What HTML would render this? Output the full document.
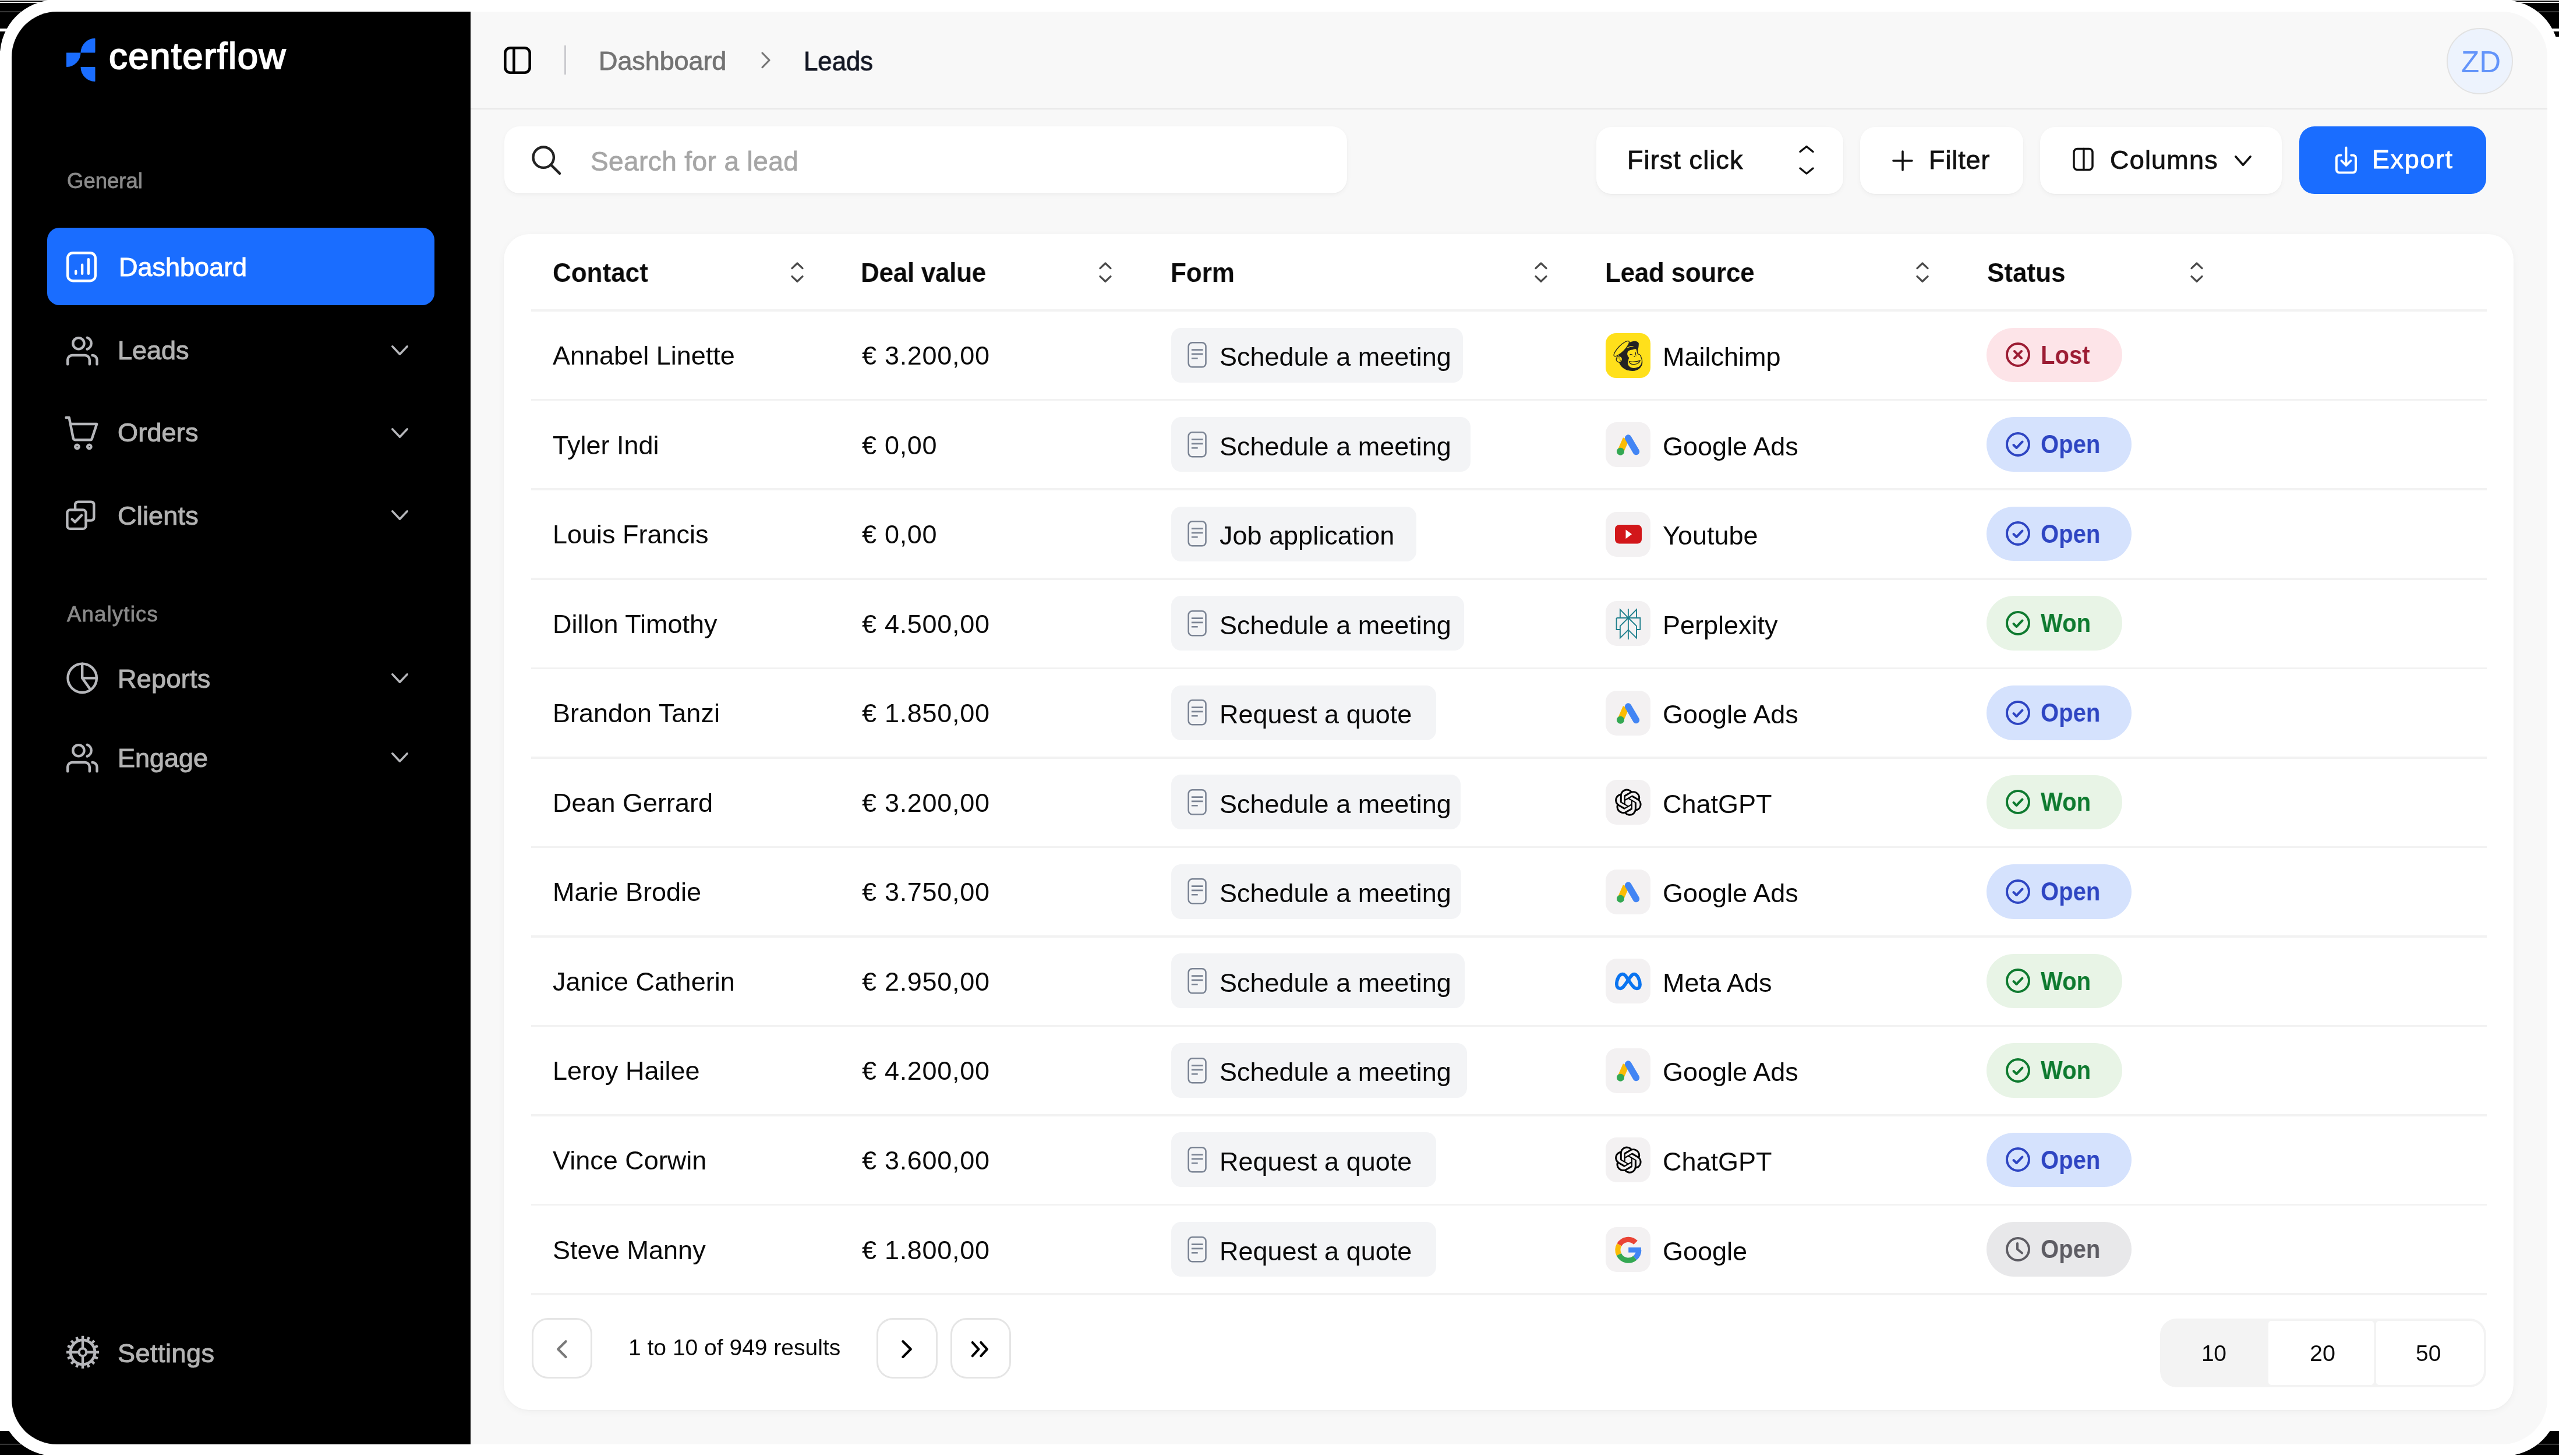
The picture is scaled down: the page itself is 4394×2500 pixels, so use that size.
<!DOCTYPE html>
<html><head><meta charset="utf-8">
<style>
*{box-sizing:border-box;margin:0;padding:0}
html,body{width:4394px;height:2500px;overflow:hidden;background:#000;font-family:"Liberation Sans",sans-serif}
.abs{position:absolute}
.t{position:absolute;white-space:nowrap;line-height:1;-webkit-font-smoothing:antialiased;will-change:transform}
</style></head><body>

<div class="abs" style="left:0;top:0;width:4394px;height:2500px;background:#fff"></div>
<div class="abs" style="left:0px;top:0.9px;width:110px;height:2.0px;background:#000"></div>
<div class="abs" style="left:0px;top:5px;width:110px;height:14.8px;background:#000"></div>
<div class="abs" style="left:0px;top:21.3px;width:110px;height:27.499999999999996px;background:#000"></div>
<div class="abs" style="left:0px;top:54px;width:110px;height:32.599999999999994px;background:#000"></div>
<div class="abs" style="left:0px;top:2457px;width:110px;height:22px;background:#000"></div>
<div class="abs" style="left:0px;top:2480.2px;width:110px;height:17.800000000000182px;background:#000"></div>
<div class="abs" style="left:4284px;top:0.9px;width:110px;height:2.0px;background:#000"></div>
<div class="abs" style="left:4284px;top:5px;width:110px;height:14.8px;background:#000"></div>
<div class="abs" style="left:4284px;top:21.3px;width:110px;height:27.499999999999996px;background:#000"></div>
<div class="abs" style="left:4284px;top:54px;width:110px;height:9px;background:#000"></div>
<div class="abs" style="left:4284px;top:2457px;width:110px;height:22px;background:#000"></div>
<div class="abs" style="left:4284px;top:2480.2px;width:110px;height:17.800000000000182px;background:#000"></div>
<div class="abs" style="left:0px;top:0px;width:4394px;height:2500px;background:#fff;border-radius:95px"></div>
<div class="abs" style="left:20px;top:20px;width:4354px;height:2460px;border-radius:78px;overflow:hidden;background:#f8f8f8">
<div class="abs" style="left:0px;top:0px;width:788px;height:2460px;background:#000"></div>
</div>
<svg class="abs" style="left:112px;top:64px;overflow:visible;" width="54" height="78" viewBox="0 0 54 78" fill="#1a6dff" stroke="none" stroke-width="4" stroke-linecap="round" stroke-linejoin="round">
<path d="M51.5 2.2 V25.8 Q51.5 26.5 50.8 26.5 H26.5 A25 25 0 0 1 50.8 1.8 Q51.5 1.8 51.5 2.2Z"/>
<path d="M2 26.5 H26.5 A24.5 24.5 0 0 1 2.7 51 Q2 51 2 50.3Z"/>
<path d="M26.5 51 H50.8 Q51.5 51 51.5 51.7 V75.3 Q51.5 76 50.8 76 A25 25 0 0 1 26.5 51Z"/>
</svg>
<div class="t" style="left:187px;top:65.2px;font-size:63.5px;color:#fff;font-weight:400;letter-spacing:1.55px;-webkit-text-stroke:2px #fff;">centerflow</div>
<div class="t" style="left:115px;top:293.1px;font-size:36.5px;color:#8a8a8a;font-weight:400;letter-spacing:0px;-webkit-text-stroke:0.8px #8a8a8a;">General</div>
<div class="abs" style="left:81px;top:391px;width:665px;height:133px;background:#1a6dff;border-radius:21px"></div>
<svg class="abs" style="left:114px;top:432px;overflow:visible;" width="52" height="52" viewBox="0 0 52 52" fill="none" stroke="#fff" stroke-width="4.4" stroke-linecap="round" stroke-linejoin="round"><rect x="2.2" y="2.2" width="47.6" height="48" rx="9"/><path d="M16.2 37.8V33.6M27.1 37.8V22.6M37.9 37.8V13.2"/></svg>
<div class="t" style="left:204px;top:435.9px;font-size:45px;color:#fff;font-weight:400;letter-spacing:0px;-webkit-text-stroke:1px #fff;">Dashboard</div>
<svg class="abs" style="left:114px;top:560px;overflow:visible;" width="56" height="68" viewBox="0 0 56 68" fill="none" stroke="#b6b7bb" stroke-width="4.4" stroke-linecap="round" stroke-linejoin="round"><circle cx="20.9" cy="29.7" r="9.6"/><path d="M35.7 19.8 A10.5 10.5 0 0 1 35.7 39.6"/><path d="M2.2 65.4 V58 A8 8 0 0 1 10.2 50 H31.8 A8 8 0 0 1 39.8 58 V65.4"/><path d="M44.5 50 A8 8 0 0 1 52.5 58 V65.4"/></svg>
<div class="t" style="left:202px;top:578.9px;font-size:45px;color:#b3b3b3;font-weight:400;letter-spacing:0px;-webkit-text-stroke:1px #b3b3b3;">Leads</div>
<svg class="abs" style="left:672px;top:593px;overflow:visible;" width="29" height="17" viewBox="0 0 29 17" fill="none" stroke="#b6b7bb" stroke-width="3.6" stroke-linecap="round" stroke-linejoin="round"><path d="M1.8 1.8 L14.5 15.2 L27.2 1.8"/></svg>
<svg class="abs" style="left:100px;top:700px;overflow:visible;" width="80" height="80" viewBox="0 0 80 80" fill="none" stroke="#b6b7bb" stroke-width="4.4" stroke-linecap="round" stroke-linejoin="round"><path d="M13.5 17 H18.7 L25.8 52.7 Q26.5 55.2 29 55.2 H55 Q57.5 55.2 58 52.7 L66.2 28 H20.9"/><circle cx="32.4" cy="67" r="3.2"/><circle cx="53.3" cy="67" r="3.2"/></svg>
<div class="t" style="left:202px;top:719.9px;font-size:45px;color:#b3b3b3;font-weight:400;letter-spacing:0.2px;-webkit-text-stroke:1px #b3b3b3;">Orders</div>
<svg class="abs" style="left:672px;top:734.5px;overflow:visible;" width="29" height="17" viewBox="0 0 29 17" fill="none" stroke="#b6b7bb" stroke-width="3.6" stroke-linecap="round" stroke-linejoin="round"><path d="M1.8 1.8 L14.5 15.2 L27.2 1.8"/></svg>
<svg class="abs" style="left:100px;top:845px;overflow:visible;" width="80" height="80" viewBox="0 0 80 80" fill="none" stroke="#b6b7bb" stroke-width="4.4" stroke-linecap="round" stroke-linejoin="round"><rect x="15.4" y="30.5" width="32.1" height="32.4" rx="5"/><path d="M29.1 30.5 V21.8 Q29.1 16.8 34.1 16.8 H56.3 Q61.3 16.8 61.3 21.8 V43.6 Q61.3 48.6 56.3 48.6 H47.5"/><path d="M23.6 46.4 L28.8 51.4 L40.1 39.8"/></svg>
<div class="t" style="left:202px;top:862.9px;font-size:45px;color:#b3b3b3;font-weight:400;letter-spacing:0.2px;-webkit-text-stroke:1px #b3b3b3;">Clients</div>
<svg class="abs" style="left:672px;top:876px;overflow:visible;" width="29" height="17" viewBox="0 0 29 17" fill="none" stroke="#b6b7bb" stroke-width="3.6" stroke-linecap="round" stroke-linejoin="round"><path d="M1.8 1.8 L14.5 15.2 L27.2 1.8"/></svg>
<div class="t" style="left:115px;top:1036.6px;font-size:36.5px;color:#8a8a8a;font-weight:400;letter-spacing:1.2px;-webkit-text-stroke:0.8px #8a8a8a;">Analytics</div>
<svg class="abs" style="left:100px;top:1125px;overflow:visible;" width="80" height="80" viewBox="0 0 80 80" fill="none" stroke="#b6b7bb" stroke-width="4.4" stroke-linecap="round" stroke-linejoin="round"><circle cx="41.2" cy="39.3" r="24.7"/><path d="M41.2 14.6 V39.3 H65.9 M41.2 39.3 L54.4 57.7"/></svg>
<div class="t" style="left:202px;top:1142.9px;font-size:45px;color:#b3b3b3;font-weight:400;letter-spacing:0.3px;-webkit-text-stroke:1px #b3b3b3;">Reports</div>
<svg class="abs" style="left:672px;top:1156px;overflow:visible;" width="29" height="17" viewBox="0 0 29 17" fill="none" stroke="#b6b7bb" stroke-width="3.6" stroke-linecap="round" stroke-linejoin="round"><path d="M1.8 1.8 L14.5 15.2 L27.2 1.8"/></svg>
<svg class="abs" style="left:114px;top:1258.5px;overflow:visible;" width="56" height="68" viewBox="0 0 56 68" fill="none" stroke="#b6b7bb" stroke-width="4.4" stroke-linecap="round" stroke-linejoin="round"><circle cx="20.9" cy="29.7" r="9.6"/><path d="M35.7 19.8 A10.5 10.5 0 0 1 35.7 39.6"/><path d="M2.2 65.4 V58 A8 8 0 0 1 10.2 50 H31.8 A8 8 0 0 1 39.8 58 V65.4"/><path d="M44.5 50 A8 8 0 0 1 52.5 58 V65.4"/></svg>
<div class="t" style="left:202px;top:1278.9px;font-size:45px;color:#b3b3b3;font-weight:400;letter-spacing:0px;-webkit-text-stroke:1px #b3b3b3;">Engage</div>
<svg class="abs" style="left:672px;top:1291.6px;overflow:visible;" width="29" height="17" viewBox="0 0 29 17" fill="none" stroke="#b6b7bb" stroke-width="3.6" stroke-linecap="round" stroke-linejoin="round"><path d="M1.8 1.8 L14.5 15.2 L27.2 1.8"/></svg>
<svg class="abs" style="left:100px;top:2280px;overflow:visible;" width="84" height="84" viewBox="0 0 84 84" fill="none" stroke="#b6b7bb" stroke-width="4.4" stroke-linecap="round" stroke-linejoin="round"><circle cx="42" cy="41.8" r="20.9" stroke-width="4.8"/><circle cx="42" cy="41.8" r="6.5" stroke-width="4"/><path d="M42 21 V35.3 M42 48.3 V62.6 M21 41.8 H35.5 M48.5 41.8 H63"/><path d="M63.00 41.80 L70.00 41.80 M61.40 49.84 L67.87 52.52 M56.85 56.65 L61.80 61.60 M50.04 61.20 L52.72 67.67 M42.00 62.80 L42.00 69.80 M33.96 61.20 L31.28 67.67 M27.15 56.65 L22.20 61.60 M22.60 49.84 L16.13 52.52 M21.00 41.80 L14.00 41.80 M22.60 33.76 L16.13 31.08 M27.15 26.95 L22.20 22.00 M33.96 22.40 L31.28 15.93 M42.00 20.80 L42.00 13.80 M50.04 22.40 L52.72 15.93 M56.85 26.95 L61.80 22.00 M61.40 33.76 L67.87 31.08 " stroke-linecap="butt"/></svg>
<div class="t" style="left:202px;top:2300.9px;font-size:45px;color:#b3b3b3;font-weight:400;letter-spacing:0.5px;-webkit-text-stroke:1px #b3b3b3;">Settings</div>
<svg class="abs" style="left:865px;top:80px;overflow:visible;" width="48" height="48" viewBox="0 0 48 48" fill="none" stroke="#000" stroke-width="4.6" stroke-linecap="round" stroke-linejoin="round"><rect x="2.3" y="2.3" width="42.4" height="42.4" rx="9"/><path d="M17.4 2.3 V44.7"/></svg>
<div class="abs" style="left:968.8px;top:77.6px;width:2.8px;height:50px;background:#cbcbcf"></div>
<div class="t" style="left:1028px;top:81.9px;font-size:45px;color:#737373;font-weight:400;letter-spacing:-0.1px;-webkit-text-stroke:0.8px #737373;">Dashboard</div>
<svg class="abs" style="left:1300px;top:86px;overflow:visible;" width="28" height="34" viewBox="0 0 28 34" fill="none" stroke="#777" stroke-width="3.2" stroke-linecap="round" stroke-linejoin="round"><path d="M9 5 L21 17.3 L9 29.6"/></svg>
<div class="t" style="left:1380px;top:82.1px;font-size:46px;color:#141824;font-weight:400;letter-spacing:0px;transform:scaleX(0.95);transform-origin:0 0;-webkit-text-stroke:0.9px #141824;">Leads</div>
<div class="abs" style="left:4201px;top:48px;width:114px;height:114px;background:#edf3fd;border:2px solid #e2e2e2;border-radius:50%"></div>
<div class="t" style="left:4226px;top:80.8px;font-size:51px;color:#6394fa;font-weight:400;letter-spacing:0px;">ZD</div>
<div class="abs" style="left:808px;top:186px;width:3566px;height:2px;background:#e8e8e8"></div>
<div class="abs" style="left:866px;top:217px;width:1447px;height:115px;background:#fff;border-radius:26px;box-shadow:0 3px 8px rgba(0,0,0,0.04),0 1px 2px rgba(0,0,0,0.03)"></div>
<svg class="abs" style="left:900px;top:235px;overflow:visible;" width="80" height="80" viewBox="0 0 80 80" fill="none" stroke="#222" stroke-width="4.4" stroke-linecap="round" stroke-linejoin="round"><circle cx="33.2" cy="35.2" r="17.7"/><path d="M46 48 L61 62.9"/></svg>
<div class="t" style="left:1013.5px;top:254.1px;font-size:46px;color:#a6a6a6;font-weight:400;letter-spacing:0.4px;-webkit-text-stroke:0.8px #a6a6a6;">Search for a lead</div>
<div class="abs" style="left:2741px;top:218px;width:424px;height:115px;background:#fff;border-radius:26px;box-shadow:0 3px 8px rgba(0,0,0,0.04),0 1px 2px rgba(0,0,0,0.03)"></div>
<div class="t" style="left:2794px;top:251.9px;font-size:45px;color:#111;font-weight:400;letter-spacing:1.1px;-webkit-text-stroke:0.8px #111;">First click</div>
<svg class="abs" style="left:3085px;top:246px;overflow:visible;" width="34" height="58" viewBox="0 0 34 58" fill="none" stroke="#111" stroke-width="3.4" stroke-linecap="round" stroke-linejoin="round"><path d="M6 14.5 L17 5.5 L28 14.5 M6 43 L17 52 L28 43"/></svg>
<div class="abs" style="left:3194px;top:218px;width:280px;height:115px;background:#fff;border-radius:26px;box-shadow:0 3px 8px rgba(0,0,0,0.04),0 1px 2px rgba(0,0,0,0.03)"></div>
<svg class="abs" style="left:3245px;top:255px;overflow:visible;" width="44" height="44" viewBox="0 0 44 44" fill="none" stroke="#111" stroke-width="3.6" stroke-linecap="round" stroke-linejoin="round"><path d="M22 5 V37 M6 21 H38"/></svg>
<div class="t" style="left:3312px;top:251.9px;font-size:45px;color:#111;font-weight:400;letter-spacing:0.9px;-webkit-text-stroke:0.8px #111;">Filter</div>
<div class="abs" style="left:3503px;top:217.5px;width:415px;height:115px;background:#fff;border-radius:26px;box-shadow:0 3px 8px rgba(0,0,0,0.04),0 1px 2px rgba(0,0,0,0.03)"></div>
<svg class="abs" style="left:3557px;top:252px;overflow:visible;" width="40" height="43" viewBox="0 0 40 43" fill="none" stroke="#111" stroke-width="3.5" stroke-linecap="round" stroke-linejoin="round"><rect x="4" y="3.5" width="32" height="36" rx="6"/><path d="M20.9 3.5 V39.5"/></svg>
<div class="t" style="left:3623px;top:251.9px;font-size:45px;color:#111;font-weight:400;letter-spacing:1.2px;-webkit-text-stroke:0.8px #111;">Columns</div>
<svg class="abs" style="left:3837px;top:266.5px;overflow:visible;" width="29" height="18" viewBox="0 0 29 18" fill="none" stroke="#111" stroke-width="3.6" stroke-linecap="round" stroke-linejoin="round"><path d="M1.8 1.8 L14.5 16.2 L27.2 1.8"/></svg>
<div class="abs" style="left:3948px;top:217px;width:321px;height:116px;background:#1a6dff;border-radius:26px"></div>
<svg class="abs" style="left:3990px;top:235px;overflow:visible;" width="80" height="80" viewBox="0 0 80 80" fill="none" stroke="#fff" stroke-width="3.85" stroke-linecap="round" stroke-linejoin="round"><path d="M29.7 31.6 H26.9 Q21.9 31.6 21.9 36.6 V56.3 Q21.9 61.3 26.9 61.3 H50 Q55 61.3 55 56.3 V36.6 Q55 31.6 50 31.6 H47.2"/><path d="M38.5 18.4 V49 M30.5 41 L38.5 49 L46.5 41"/></svg>
<div class="t" style="left:4073px;top:250.9px;font-size:45px;color:#fff;font-weight:400;letter-spacing:1.6px;-webkit-text-stroke:0.8px #fff;">Export</div>
<div class="abs" style="left:865px;top:402px;width:3451px;height:2019px;background:#fff;border-radius:44px;box-shadow:0 3px 14px rgba(0,0,0,0.04),0 1px 3px rgba(0,0,0,0.025)"></div>
<div class="t" style="left:949px;top:444.6px;font-size:46px;color:#0a0a0a;font-weight:700;letter-spacing:0px;transform:scaleX(0.957);transform-origin:0 0;">Contact</div>
<svg class="abs" style="left:1356.6px;top:448px;overflow:visible;" width="24" height="40" viewBox="0 0 24 40" fill="none" stroke="#4a4a4a" stroke-width="3.3" stroke-linecap="round" stroke-linejoin="round"><path d="M3 12.6 L12 4 L21 12.6 M3 26.6 L12 35.3 L21 26.6"/></svg>
<div class="t" style="left:1478px;top:444.6px;font-size:46px;color:#0a0a0a;font-weight:700;letter-spacing:-0.3px;transform:scaleX(0.957);transform-origin:0 0;">Deal value</div>
<svg class="abs" style="left:1885.5px;top:448px;overflow:visible;" width="24" height="40" viewBox="0 0 24 40" fill="none" stroke="#4a4a4a" stroke-width="3.3" stroke-linecap="round" stroke-linejoin="round"><path d="M3 12.6 L12 4 L21 12.6 M3 26.6 L12 35.3 L21 26.6"/></svg>
<div class="t" style="left:2009.5px;top:444.6px;font-size:46px;color:#0a0a0a;font-weight:700;letter-spacing:0px;transform:scaleX(0.957);transform-origin:0 0;">Form</div>
<svg class="abs" style="left:2634px;top:448px;overflow:visible;" width="24" height="40" viewBox="0 0 24 40" fill="none" stroke="#4a4a4a" stroke-width="3.3" stroke-linecap="round" stroke-linejoin="round"><path d="M3 12.6 L12 4 L21 12.6 M3 26.6 L12 35.3 L21 26.6"/></svg>
<div class="t" style="left:2755.5px;top:444.6px;font-size:46px;color:#0a0a0a;font-weight:700;letter-spacing:-0.3px;transform:scaleX(0.957);transform-origin:0 0;">Lead source</div>
<svg class="abs" style="left:3288.5px;top:448px;overflow:visible;" width="24" height="40" viewBox="0 0 24 40" fill="none" stroke="#4a4a4a" stroke-width="3.3" stroke-linecap="round" stroke-linejoin="round"><path d="M3 12.6 L12 4 L21 12.6 M3 26.6 L12 35.3 L21 26.6"/></svg>
<div class="t" style="left:3412px;top:444.6px;font-size:46px;color:#0a0a0a;font-weight:700;letter-spacing:0px;transform:scaleX(0.957);transform-origin:0 0;">Status</div>
<svg class="abs" style="left:3759.5px;top:448px;overflow:visible;" width="24" height="40" viewBox="0 0 24 40" fill="none" stroke="#4a4a4a" stroke-width="3.3" stroke-linecap="round" stroke-linejoin="round"><path d="M3 12.6 L12 4 L21 12.6 M3 26.6 L12 35.3 L21 26.6"/></svg>
<div class="abs" style="left:912px;top:531.35px;width:3358px;height:3.5px;background:#f2f2f2"></div>
<div class="t" style="left:949px;top:588.0px;font-size:45px;color:#0a0a0a;font-weight:400;letter-spacing:0px;">Annabel Linette</div>
<div class="t" style="left:1480px;top:588.0px;font-size:45px;color:#0a0a0a;font-weight:400;letter-spacing:0.7px;">€ 3.200,00</div>
<div class="abs" style="left:2011px;top:562.5px;width:501px;height:94px;background:#f3f4f6;border-radius:17px"></div>
<svg class="abs" style="left:2038px;top:586.1px;overflow:visible;" width="36" height="47" viewBox="0 0 36 47" fill="none" stroke="#7b8494" stroke-width="2.6" stroke-linecap="round" stroke-linejoin="round"><rect x="2.7" y="2.2" width="29.8" height="42.1" rx="6.5"/><path d="M7.9 14.6 H27.6 M7.9 21.9 H27.6 M7.9 29.2 H18.7" stroke-linecap="butt"/></svg>
<div class="t" style="left:2094px;top:590.0px;font-size:45px;color:#0a0a0a;font-weight:400;letter-spacing:0px;">Schedule a meeting</div>
<div class="abs" style="left:2757px;top:571.5px;width:77px;height:77px;background:#ffe01b;border-radius:18px"></div>
<svg class="abs" style="left:2757px;top:571.5px;overflow:visible;" width="77" height="77" viewBox="0 0 77 77" fill="none" stroke="none" stroke-width="4" stroke-linecap="round" stroke-linejoin="round">
<path d="M56.8 19.5 C57.8 15.5 53 13.2 47.5 14 C41 15 33 20 28 27 C23 34 21.5 40 22.5 47.5 C24 57.5 33.5 65 46 65 C56 65 63.5 58 63.4 49 L55 40 L55.2 30 C56.2 26 56.8 22 56.8 19.5 Z" fill="#232323"/>
<path d="M45.1 27.9 C48 27.2 50.5 26.2 52.5 26.4 C54.2 29 54.5 33 55.2 35.6 C58 36.5 60.8 38.5 60.8 41.2 C62.3 43.8 62.8 46.5 62.4 48.8 C62.3 54.8 58.8 58.4 54 59.5 C50 60.8 44.5 60.8 41.2 58.6 C38.5 56.5 37.2 53.5 37.7 51.6 C38.2 48.6 37.8 45.8 39.5 42.5 C37.6 40.2 36.2 37.6 36.5 35.3 C36.8 32 38.2 30.2 39.6 29.8 C41.3 28.6 43.2 28 45.1 27.9 Z" fill="#ffe01b" stroke="#232323" stroke-width="1.3"/>
<path d="M33.5 26.5 C38 23.5 44 21.2 48.5 22.2 C45 23.2 38 25 33.5 26.5 Z" fill="#ffe01b"/>
<ellipse cx="27.3" cy="26.6" rx="17.8" ry="5.4" transform="rotate(-45 27.3 26.6)" fill="#ffe01b" stroke="#232323" stroke-width="1.4"/>
<circle cx="23.4" cy="44.8" r="5.2" fill="#ffe01b" stroke="#232323" stroke-width="1.4"/>
<path d="M21.3 43.2 C22.5 41.5 24.8 42 24.6 44 C24.4 45.3 25 46.5 25.3 47.3" fill="none" stroke="#232323" stroke-width="1"/>
<path d="M40.6 48.6 C45 50 53 49.5 59.3 46.8 C58.5 50.5 54.5 53.5 49 53.6 C44.5 53.8 41 52 40.6 48.6 Z" fill="#ffe01b" stroke="#232323" stroke-width="1.3"/>
<path d="M41.6 37.2 C43 36 45.2 36.4 45.8 37.6" fill="none" stroke="#232323" stroke-width="1.2"/>
<circle cx="49.2" cy="39.9" r="0.9" fill="#232323"/>
<path d="M51.6 33.4 V36.5" stroke="#232323" stroke-width="1.3" fill="none"/>
<circle cx="52" cy="38.9" r="0.7" fill="#232323"/>
</svg>
<div class="t" style="left:2855px;top:590.0px;font-size:45px;color:#0a0a0a;font-weight:400;letter-spacing:0px;">Mailchimp</div>
<div class="abs" style="left:3411px;top:562.8000000000001px;width:233px;height:93.5px;background:#fde4e8;border-radius:47px"></div>
<svg class="abs" style="left:3444px;top:588.3000000000001px;overflow:visible;" width="42" height="42" viewBox="0 0 42 42" fill="none" stroke="#9c1c33" stroke-width="4" stroke-linecap="round" stroke-linejoin="round"><circle cx="21" cy="21" r="19"/><path d="M15 15 L27 27 M27 15 L15 27"/></svg>
<div class="t" style="left:3504px;top:586.7px;font-size:45px;color:#9c1c33;font-weight:700;letter-spacing:0px;transform:scaleX(0.89);transform-origin:0 0;">Lost</div>
<div class="abs" style="left:912px;top:684.9000000000001px;width:3358px;height:3.5px;background:#f2f2f2"></div>
<div class="t" style="left:949px;top:741.5px;font-size:45px;color:#0a0a0a;font-weight:400;letter-spacing:0px;">Tyler Indi</div>
<div class="t" style="left:1480px;top:741.5px;font-size:45px;color:#0a0a0a;font-weight:400;letter-spacing:0.7px;">€ 0,00</div>
<div class="abs" style="left:2011px;top:716.0500000000001px;width:514px;height:94px;background:#f3f4f6;border-radius:17px"></div>
<svg class="abs" style="left:2038px;top:739.6500000000001px;overflow:visible;" width="36" height="47" viewBox="0 0 36 47" fill="none" stroke="#7b8494" stroke-width="2.6" stroke-linecap="round" stroke-linejoin="round"><rect x="2.7" y="2.2" width="29.8" height="42.1" rx="6.5"/><path d="M7.9 14.6 H27.6 M7.9 21.9 H27.6 M7.9 29.2 H18.7" stroke-linecap="butt"/></svg>
<div class="t" style="left:2094px;top:743.5px;font-size:45px;color:#0a0a0a;font-weight:400;letter-spacing:0px;">Schedule a meeting</div>
<div class="abs" style="left:2757px;top:725.0500000000001px;width:77px;height:77px;background:#f3f1f2;border-radius:19px"></div>
<svg class="abs" style="left:2757px;top:725.0500000000001px;overflow:visible;" width="77" height="77" viewBox="0 0 77 77" fill="none" stroke="none" stroke-width="4" stroke-linecap="round" stroke-linejoin="round">
<path d="M35 28.5 L25.5 50.2" stroke="#fbbc04" stroke-width="11" stroke-linecap="butt"/>
<path d="M38.7 27.1 L52.4 50.5" stroke="#4285f4" stroke-width="11.5" stroke-linecap="round"/>
<circle cx="25.5" cy="50.2" r="6.5" fill="#34a853" stroke="none"/>
</svg>
<div class="t" style="left:2855px;top:743.5px;font-size:45px;color:#0a0a0a;font-weight:400;letter-spacing:0px;">Google Ads</div>
<div class="abs" style="left:3411px;top:716.3500000000001px;width:249px;height:93.5px;background:#d5e2fd;border-radius:47px"></div>
<svg class="abs" style="left:3444px;top:741.8500000000001px;overflow:visible;" width="42" height="42" viewBox="0 0 42 42" fill="none" stroke="#2e45c2" stroke-width="4" stroke-linecap="round" stroke-linejoin="round"><circle cx="21" cy="21" r="19"/><path d="M13.5 22 L18.5 27 L28.5 16.5"/></svg>
<div class="t" style="left:3504px;top:740.2px;font-size:45px;color:#2e45c2;font-weight:700;letter-spacing:0px;transform:scaleX(0.89);transform-origin:0 0;">Open</div>
<div class="abs" style="left:912px;top:838.45px;width:3358px;height:3.5px;background:#f2f2f2"></div>
<div class="t" style="left:949px;top:895.1px;font-size:45px;color:#0a0a0a;font-weight:400;letter-spacing:0px;">Louis Francis</div>
<div class="t" style="left:1480px;top:895.1px;font-size:45px;color:#0a0a0a;font-weight:400;letter-spacing:0.7px;">€ 0,00</div>
<div class="abs" style="left:2011px;top:869.6px;width:421px;height:94px;background:#f3f4f6;border-radius:17px"></div>
<svg class="abs" style="left:2038px;top:893.2px;overflow:visible;" width="36" height="47" viewBox="0 0 36 47" fill="none" stroke="#7b8494" stroke-width="2.6" stroke-linecap="round" stroke-linejoin="round"><rect x="2.7" y="2.2" width="29.8" height="42.1" rx="6.5"/><path d="M7.9 14.6 H27.6 M7.9 21.9 H27.6 M7.9 29.2 H18.7" stroke-linecap="butt"/></svg>
<div class="t" style="left:2094px;top:897.1px;font-size:45px;color:#0a0a0a;font-weight:400;letter-spacing:0px;">Job application</div>
<div class="abs" style="left:2757px;top:878.6px;width:77px;height:77px;background:#f3f1f2;border-radius:19px"></div>
<svg class="abs" style="left:2757px;top:878.6px;overflow:visible;" width="77" height="77" viewBox="0 0 77 77" fill="none" stroke="none" stroke-width="4" stroke-linecap="round" stroke-linejoin="round">
<rect x="16" y="22" width="46" height="32.5" rx="7.5" fill="#d2171a" stroke="none"/>
<path d="M34.5 30.5 L45 38.2 L34.5 46Z" fill="#fff" stroke="none"/>
</svg>
<div class="t" style="left:2855px;top:897.1px;font-size:45px;color:#0a0a0a;font-weight:400;letter-spacing:0px;">Youtube</div>
<div class="abs" style="left:3411px;top:869.9000000000001px;width:249px;height:93.5px;background:#d5e2fd;border-radius:47px"></div>
<svg class="abs" style="left:3444px;top:895.4000000000001px;overflow:visible;" width="42" height="42" viewBox="0 0 42 42" fill="none" stroke="#2e45c2" stroke-width="4" stroke-linecap="round" stroke-linejoin="round"><circle cx="21" cy="21" r="19"/><path d="M13.5 22 L18.5 27 L28.5 16.5"/></svg>
<div class="t" style="left:3504px;top:893.8px;font-size:45px;color:#2e45c2;font-weight:700;letter-spacing:0px;transform:scaleX(0.89);transform-origin:0 0;">Open</div>
<div class="abs" style="left:912px;top:992.0px;width:3358px;height:3.5px;background:#f2f2f2"></div>
<div class="t" style="left:949px;top:1048.6px;font-size:45px;color:#0a0a0a;font-weight:400;letter-spacing:0px;">Dillon Timothy</div>
<div class="t" style="left:1480px;top:1048.6px;font-size:45px;color:#0a0a0a;font-weight:400;letter-spacing:0.7px;">€ 4.500,00</div>
<div class="abs" style="left:2011px;top:1023.15px;width:503px;height:94px;background:#f3f4f6;border-radius:17px"></div>
<svg class="abs" style="left:2038px;top:1046.75px;overflow:visible;" width="36" height="47" viewBox="0 0 36 47" fill="none" stroke="#7b8494" stroke-width="2.6" stroke-linecap="round" stroke-linejoin="round"><rect x="2.7" y="2.2" width="29.8" height="42.1" rx="6.5"/><path d="M7.9 14.6 H27.6 M7.9 21.9 H27.6 M7.9 29.2 H18.7" stroke-linecap="butt"/></svg>
<div class="t" style="left:2094px;top:1050.6px;font-size:45px;color:#0a0a0a;font-weight:400;letter-spacing:0px;">Schedule a meeting</div>
<div class="abs" style="left:2757px;top:1032.15px;width:77px;height:77px;background:#f3f1f2;border-radius:19px"></div>
<svg class="abs" style="left:2757px;top:1032.15px;overflow:visible;" width="77" height="77" viewBox="0 0 77 77" fill="none" stroke="none" stroke-width="4" stroke-linecap="round" stroke-linejoin="round">
<g stroke="#20808d" stroke-width="1.9" fill="none" stroke-linejoin="miter" stroke-linecap="butt">
<path d="M38.9 13.4 V65.9"/>
<path d="M24.9 29 V14.5 L38.9 29 L53 14.5 V29"/>
<path d="M18.6 29 H59.3 V49 H53 M24.9 49 H18.6 V29"/>
<path d="M38.9 29 L24.9 42.8 V63.4 L38.9 49.6 L53 63.4 V42.8 L38.9 29"/>
</g>
<circle cx="38.9" cy="29.2" r="2.4" fill="#20808d" stroke="none"/>
</svg>
<div class="t" style="left:2855px;top:1050.6px;font-size:45px;color:#0a0a0a;font-weight:400;letter-spacing:0px;">Perplexity</div>
<div class="abs" style="left:3411px;top:1023.45px;width:233px;height:93.5px;background:#e8f4e6;border-radius:47px"></div>
<svg class="abs" style="left:3444px;top:1048.95px;overflow:visible;" width="42" height="42" viewBox="0 0 42 42" fill="none" stroke="#0e7a2f" stroke-width="4" stroke-linecap="round" stroke-linejoin="round"><circle cx="21" cy="21" r="19"/><path d="M13.5 22 L18.5 27 L28.5 16.5"/></svg>
<div class="t" style="left:3504px;top:1047.3px;font-size:45px;color:#0e7a2f;font-weight:700;letter-spacing:0px;transform:scaleX(0.89);transform-origin:0 0;">Won</div>
<div class="abs" style="left:912px;top:1145.55px;width:3358px;height:3.5px;background:#f2f2f2"></div>
<div class="t" style="left:949px;top:1202.2px;font-size:45px;color:#0a0a0a;font-weight:400;letter-spacing:0px;">Brandon Tanzi</div>
<div class="t" style="left:1480px;top:1202.2px;font-size:45px;color:#0a0a0a;font-weight:400;letter-spacing:0.7px;">€ 1.850,00</div>
<div class="abs" style="left:2011px;top:1176.7000000000003px;width:455px;height:94px;background:#f3f4f6;border-radius:17px"></div>
<svg class="abs" style="left:2038px;top:1200.3000000000002px;overflow:visible;" width="36" height="47" viewBox="0 0 36 47" fill="none" stroke="#7b8494" stroke-width="2.6" stroke-linecap="round" stroke-linejoin="round"><rect x="2.7" y="2.2" width="29.8" height="42.1" rx="6.5"/><path d="M7.9 14.6 H27.6 M7.9 21.9 H27.6 M7.9 29.2 H18.7" stroke-linecap="butt"/></svg>
<div class="t" style="left:2094px;top:1204.2px;font-size:45px;color:#0a0a0a;font-weight:400;letter-spacing:0px;">Request a quote</div>
<div class="abs" style="left:2757px;top:1185.7000000000003px;width:77px;height:77px;background:#f3f1f2;border-radius:19px"></div>
<svg class="abs" style="left:2757px;top:1185.7000000000003px;overflow:visible;" width="77" height="77" viewBox="0 0 77 77" fill="none" stroke="none" stroke-width="4" stroke-linecap="round" stroke-linejoin="round">
<path d="M35 28.5 L25.5 50.2" stroke="#fbbc04" stroke-width="11" stroke-linecap="butt"/>
<path d="M38.7 27.1 L52.4 50.5" stroke="#4285f4" stroke-width="11.5" stroke-linecap="round"/>
<circle cx="25.5" cy="50.2" r="6.5" fill="#34a853" stroke="none"/>
</svg>
<div class="t" style="left:2855px;top:1204.2px;font-size:45px;color:#0a0a0a;font-weight:400;letter-spacing:0px;">Google Ads</div>
<div class="abs" style="left:3411px;top:1177.0000000000002px;width:249px;height:93.5px;background:#d5e2fd;border-radius:47px"></div>
<svg class="abs" style="left:3444px;top:1202.5000000000002px;overflow:visible;" width="42" height="42" viewBox="0 0 42 42" fill="none" stroke="#2e45c2" stroke-width="4" stroke-linecap="round" stroke-linejoin="round"><circle cx="21" cy="21" r="19"/><path d="M13.5 22 L18.5 27 L28.5 16.5"/></svg>
<div class="t" style="left:3504px;top:1200.9px;font-size:45px;color:#2e45c2;font-weight:700;letter-spacing:0px;transform:scaleX(0.89);transform-origin:0 0;">Open</div>
<div class="abs" style="left:912px;top:1299.1000000000001px;width:3358px;height:3.5px;background:#f2f2f2"></div>
<div class="t" style="left:949px;top:1355.7px;font-size:45px;color:#0a0a0a;font-weight:400;letter-spacing:0px;">Dean Gerrard</div>
<div class="t" style="left:1480px;top:1355.7px;font-size:45px;color:#0a0a0a;font-weight:400;letter-spacing:0.7px;">€ 3.200,00</div>
<div class="abs" style="left:2011px;top:1330.25px;width:497px;height:94px;background:#f3f4f6;border-radius:17px"></div>
<svg class="abs" style="left:2038px;top:1353.85px;overflow:visible;" width="36" height="47" viewBox="0 0 36 47" fill="none" stroke="#7b8494" stroke-width="2.6" stroke-linecap="round" stroke-linejoin="round"><rect x="2.7" y="2.2" width="29.8" height="42.1" rx="6.5"/><path d="M7.9 14.6 H27.6 M7.9 21.9 H27.6 M7.9 29.2 H18.7" stroke-linecap="butt"/></svg>
<div class="t" style="left:2094px;top:1357.7px;font-size:45px;color:#0a0a0a;font-weight:400;letter-spacing:0px;">Schedule a meeting</div>
<div class="abs" style="left:2757px;top:1339.25px;width:77px;height:77px;background:#f3f1f2;border-radius:19px"></div>
<svg class="abs" style="left:2757px;top:1339.25px;overflow:visible;" width="77" height="77" viewBox="0 0 77 77" fill="none" stroke="none" stroke-width="4" stroke-linecap="round" stroke-linejoin="round"><g transform="translate(15.8 15.6) scale(1.92)"><path fill="#000" d="M22.2819 9.8211a5.9847 5.9847 0 0 0-.5157-4.9108 6.0462 6.0462 0 0 0-6.5098-2.9A6.0651 6.0651 0 0 0 4.9807 4.1818a5.9847 5.9847 0 0 0-3.9977 2.9 6.0462 6.0462 0 0 0 .7427 7.0966 5.98 5.98 0 0 0 .511 4.9107 6.051 6.051 0 0 0 6.5146 2.9001A5.9847 5.9847 0 0 0 13.2599 24a6.0557 6.0557 0 0 0 5.7718-4.2058 5.9894 5.9894 0 0 0 3.9977-2.9001 6.0557 6.0557 0 0 0-.7475-7.0729zm-9.022 12.6081a4.4755 4.4755 0 0 1-2.8764-1.0408l.1419-.0804 4.7783-2.7582a.7948.7948 0 0 0 .3927-.6813v-6.7369l2.02 1.1686a.071.071 0 0 1 .038.052v5.5826a4.504 4.504 0 0 1-4.4945 4.4944zm-9.6607-4.1254a4.4708 4.4708 0 0 1-.5346-3.0137l.142.0852 4.783 2.7582a.7712.7712 0 0 0 .7806 0l5.8428-3.3685v2.3324a.0804.0804 0 0 1-.0332.0615L9.74 19.9502a4.4992 4.4992 0 0 1-6.1408-1.6464zM2.3408 7.8956a4.485 4.485 0 0 1 2.3655-1.9728V11.6a.7664.7664 0 0 0 .3879.6765l5.8144 3.3543-2.0201 1.1685a.0757.0757 0 0 1-.071 0l-4.8303-2.7865A4.504 4.504 0 0 1 2.3408 7.872zm16.5963 3.8558L13.1038 8.364 15.1192 7.2a.0757.0757 0 0 1 .071 0l4.8303 2.7913a4.4944 4.4944 0 0 1-.6765 8.1042v-5.6772a.79.79 0 0 0-.407-.667zm2.0107-3.0231l-.142-.0852-4.7735-2.7818a.7759.7759 0 0 0-.7854 0L9.409 9.2297V6.8974a.0662.0662 0 0 1 .0284-.0615l4.8303-2.7866a4.4992 4.4992 0 0 1 6.6802 4.66zM8.3065 12.863l-2.02-1.1638a.0804.0804 0 0 1-.038-.0567V6.0742a4.4992 4.4992 0 0 1 7.3757-3.4537l-.142.0805L8.704 5.459a.7948.7948 0 0 0-.3927.6813zm1.0976-2.3654l2.602-1.4998 2.6069 1.4998v2.9994l-2.5974 1.4997-2.6067-1.4997Z"/></g></svg>
<div class="t" style="left:2855px;top:1357.7px;font-size:45px;color:#0a0a0a;font-weight:400;letter-spacing:0px;">ChatGPT</div>
<div class="abs" style="left:3411px;top:1330.55px;width:233px;height:93.5px;background:#e8f4e6;border-radius:47px"></div>
<svg class="abs" style="left:3444px;top:1356.05px;overflow:visible;" width="42" height="42" viewBox="0 0 42 42" fill="none" stroke="#0e7a2f" stroke-width="4" stroke-linecap="round" stroke-linejoin="round"><circle cx="21" cy="21" r="19"/><path d="M13.5 22 L18.5 27 L28.5 16.5"/></svg>
<div class="t" style="left:3504px;top:1354.4px;font-size:45px;color:#0e7a2f;font-weight:700;letter-spacing:0px;transform:scaleX(0.89);transform-origin:0 0;">Won</div>
<div class="abs" style="left:912px;top:1452.6499999999999px;width:3358px;height:3.5px;background:#f2f2f2"></div>
<div class="t" style="left:949px;top:1509.3px;font-size:45px;color:#0a0a0a;font-weight:400;letter-spacing:0px;">Marie Brodie</div>
<div class="t" style="left:1480px;top:1509.3px;font-size:45px;color:#0a0a0a;font-weight:400;letter-spacing:0.7px;">€ 3.750,00</div>
<div class="abs" style="left:2011px;top:1483.8000000000002px;width:498px;height:94px;background:#f3f4f6;border-radius:17px"></div>
<svg class="abs" style="left:2038px;top:1507.4px;overflow:visible;" width="36" height="47" viewBox="0 0 36 47" fill="none" stroke="#7b8494" stroke-width="2.6" stroke-linecap="round" stroke-linejoin="round"><rect x="2.7" y="2.2" width="29.8" height="42.1" rx="6.5"/><path d="M7.9 14.6 H27.6 M7.9 21.9 H27.6 M7.9 29.2 H18.7" stroke-linecap="butt"/></svg>
<div class="t" style="left:2094px;top:1511.3px;font-size:45px;color:#0a0a0a;font-weight:400;letter-spacing:0px;">Schedule a meeting</div>
<div class="abs" style="left:2757px;top:1492.8000000000002px;width:77px;height:77px;background:#f3f1f2;border-radius:19px"></div>
<svg class="abs" style="left:2757px;top:1492.8000000000002px;overflow:visible;" width="77" height="77" viewBox="0 0 77 77" fill="none" stroke="none" stroke-width="4" stroke-linecap="round" stroke-linejoin="round">
<path d="M35 28.5 L25.5 50.2" stroke="#fbbc04" stroke-width="11" stroke-linecap="butt"/>
<path d="M38.7 27.1 L52.4 50.5" stroke="#4285f4" stroke-width="11.5" stroke-linecap="round"/>
<circle cx="25.5" cy="50.2" r="6.5" fill="#34a853" stroke="none"/>
</svg>
<div class="t" style="left:2855px;top:1511.3px;font-size:45px;color:#0a0a0a;font-weight:400;letter-spacing:0px;">Google Ads</div>
<div class="abs" style="left:3411px;top:1484.1000000000001px;width:249px;height:93.5px;background:#d5e2fd;border-radius:47px"></div>
<svg class="abs" style="left:3444px;top:1509.6000000000001px;overflow:visible;" width="42" height="42" viewBox="0 0 42 42" fill="none" stroke="#2e45c2" stroke-width="4" stroke-linecap="round" stroke-linejoin="round"><circle cx="21" cy="21" r="19"/><path d="M13.5 22 L18.5 27 L28.5 16.5"/></svg>
<div class="t" style="left:3504px;top:1508.0px;font-size:45px;color:#2e45c2;font-weight:700;letter-spacing:0px;transform:scaleX(0.89);transform-origin:0 0;">Open</div>
<div class="abs" style="left:912px;top:1606.2px;width:3358px;height:3.5px;background:#f2f2f2"></div>
<div class="t" style="left:949px;top:1662.8px;font-size:45px;color:#0a0a0a;font-weight:400;letter-spacing:0px;">Janice Catherin</div>
<div class="t" style="left:1480px;top:1662.8px;font-size:45px;color:#0a0a0a;font-weight:400;letter-spacing:0.7px;">€ 2.950,00</div>
<div class="abs" style="left:2011px;top:1637.3500000000004px;width:504px;height:94px;background:#f3f4f6;border-radius:17px"></div>
<svg class="abs" style="left:2038px;top:1660.9500000000003px;overflow:visible;" width="36" height="47" viewBox="0 0 36 47" fill="none" stroke="#7b8494" stroke-width="2.6" stroke-linecap="round" stroke-linejoin="round"><rect x="2.7" y="2.2" width="29.8" height="42.1" rx="6.5"/><path d="M7.9 14.6 H27.6 M7.9 21.9 H27.6 M7.9 29.2 H18.7" stroke-linecap="butt"/></svg>
<div class="t" style="left:2094px;top:1664.8px;font-size:45px;color:#0a0a0a;font-weight:400;letter-spacing:0px;">Schedule a meeting</div>
<div class="abs" style="left:2757px;top:1646.3500000000004px;width:77px;height:77px;background:#f3f1f2;border-radius:19px"></div>
<svg class="abs" style="left:2757px;top:1646.3500000000004px;overflow:visible;" width="77" height="77" viewBox="0 0 77 77" fill="none" stroke="none" stroke-width="4" stroke-linecap="round" stroke-linejoin="round">
<path d="M38.9 36.5 C35 30 32.5 26.6 29.3 26.6 C23 26.6 18.9 36 18.9 44 C18.9 48.5 21.5 51.3 24.9 51.3 C29 51.3 32 47 38.9 36.5 C44 29 46 26.6 48.8 26.6 C54.5 26.6 59 37 59 44.5 C59 48.5 57 51.3 53.5 51.3 C49 51.3 46 47 38.9 36.5 Z" fill="none" stroke="#0a74f0" stroke-width="5.8"/>
</svg>
<div class="t" style="left:2855px;top:1664.8px;font-size:45px;color:#0a0a0a;font-weight:400;letter-spacing:0px;">Meta Ads</div>
<div class="abs" style="left:3411px;top:1637.6500000000003px;width:233px;height:93.5px;background:#e8f4e6;border-radius:47px"></div>
<svg class="abs" style="left:3444px;top:1663.1500000000003px;overflow:visible;" width="42" height="42" viewBox="0 0 42 42" fill="none" stroke="#0e7a2f" stroke-width="4" stroke-linecap="round" stroke-linejoin="round"><circle cx="21" cy="21" r="19"/><path d="M13.5 22 L18.5 27 L28.5 16.5"/></svg>
<div class="t" style="left:3504px;top:1661.5px;font-size:45px;color:#0e7a2f;font-weight:700;letter-spacing:0px;transform:scaleX(0.89);transform-origin:0 0;">Won</div>
<div class="abs" style="left:912px;top:1759.7500000000002px;width:3358px;height:3.5px;background:#f2f2f2"></div>
<div class="t" style="left:949px;top:1816.4px;font-size:45px;color:#0a0a0a;font-weight:400;letter-spacing:0px;">Leroy Hailee</div>
<div class="t" style="left:1480px;top:1816.4px;font-size:45px;color:#0a0a0a;font-weight:400;letter-spacing:0.7px;">€ 4.200,00</div>
<div class="abs" style="left:2011px;top:1790.9px;width:508px;height:94px;background:#f3f4f6;border-radius:17px"></div>
<svg class="abs" style="left:2038px;top:1814.5px;overflow:visible;" width="36" height="47" viewBox="0 0 36 47" fill="none" stroke="#7b8494" stroke-width="2.6" stroke-linecap="round" stroke-linejoin="round"><rect x="2.7" y="2.2" width="29.8" height="42.1" rx="6.5"/><path d="M7.9 14.6 H27.6 M7.9 21.9 H27.6 M7.9 29.2 H18.7" stroke-linecap="butt"/></svg>
<div class="t" style="left:2094px;top:1818.4px;font-size:45px;color:#0a0a0a;font-weight:400;letter-spacing:0px;">Schedule a meeting</div>
<div class="abs" style="left:2757px;top:1799.9px;width:77px;height:77px;background:#f3f1f2;border-radius:19px"></div>
<svg class="abs" style="left:2757px;top:1799.9px;overflow:visible;" width="77" height="77" viewBox="0 0 77 77" fill="none" stroke="none" stroke-width="4" stroke-linecap="round" stroke-linejoin="round">
<path d="M35 28.5 L25.5 50.2" stroke="#fbbc04" stroke-width="11" stroke-linecap="butt"/>
<path d="M38.7 27.1 L52.4 50.5" stroke="#4285f4" stroke-width="11.5" stroke-linecap="round"/>
<circle cx="25.5" cy="50.2" r="6.5" fill="#34a853" stroke="none"/>
</svg>
<div class="t" style="left:2855px;top:1818.4px;font-size:45px;color:#0a0a0a;font-weight:400;letter-spacing:0px;">Google Ads</div>
<div class="abs" style="left:3411px;top:1791.2px;width:233px;height:93.5px;background:#e8f4e6;border-radius:47px"></div>
<svg class="abs" style="left:3444px;top:1816.7px;overflow:visible;" width="42" height="42" viewBox="0 0 42 42" fill="none" stroke="#0e7a2f" stroke-width="4" stroke-linecap="round" stroke-linejoin="round"><circle cx="21" cy="21" r="19"/><path d="M13.5 22 L18.5 27 L28.5 16.5"/></svg>
<div class="t" style="left:3504px;top:1815.1px;font-size:45px;color:#0e7a2f;font-weight:700;letter-spacing:0px;transform:scaleX(0.89);transform-origin:0 0;">Won</div>
<div class="abs" style="left:912px;top:1913.3px;width:3358px;height:3.5px;background:#f2f2f2"></div>
<div class="t" style="left:949px;top:1969.9px;font-size:45px;color:#0a0a0a;font-weight:400;letter-spacing:0px;">Vince Corwin</div>
<div class="t" style="left:1480px;top:1969.9px;font-size:45px;color:#0a0a0a;font-weight:400;letter-spacing:0.7px;">€ 3.600,00</div>
<div class="abs" style="left:2011px;top:1944.4500000000003px;width:455px;height:94px;background:#f3f4f6;border-radius:17px"></div>
<svg class="abs" style="left:2038px;top:1968.0500000000002px;overflow:visible;" width="36" height="47" viewBox="0 0 36 47" fill="none" stroke="#7b8494" stroke-width="2.6" stroke-linecap="round" stroke-linejoin="round"><rect x="2.7" y="2.2" width="29.8" height="42.1" rx="6.5"/><path d="M7.9 14.6 H27.6 M7.9 21.9 H27.6 M7.9 29.2 H18.7" stroke-linecap="butt"/></svg>
<div class="t" style="left:2094px;top:1971.9px;font-size:45px;color:#0a0a0a;font-weight:400;letter-spacing:0px;">Request a quote</div>
<div class="abs" style="left:2757px;top:1953.4500000000003px;width:77px;height:77px;background:#f3f1f2;border-radius:19px"></div>
<svg class="abs" style="left:2757px;top:1953.4500000000003px;overflow:visible;" width="77" height="77" viewBox="0 0 77 77" fill="none" stroke="none" stroke-width="4" stroke-linecap="round" stroke-linejoin="round"><g transform="translate(15.8 15.6) scale(1.92)"><path fill="#000" d="M22.2819 9.8211a5.9847 5.9847 0 0 0-.5157-4.9108 6.0462 6.0462 0 0 0-6.5098-2.9A6.0651 6.0651 0 0 0 4.9807 4.1818a5.9847 5.9847 0 0 0-3.9977 2.9 6.0462 6.0462 0 0 0 .7427 7.0966 5.98 5.98 0 0 0 .511 4.9107 6.051 6.051 0 0 0 6.5146 2.9001A5.9847 5.9847 0 0 0 13.2599 24a6.0557 6.0557 0 0 0 5.7718-4.2058 5.9894 5.9894 0 0 0 3.9977-2.9001 6.0557 6.0557 0 0 0-.7475-7.0729zm-9.022 12.6081a4.4755 4.4755 0 0 1-2.8764-1.0408l.1419-.0804 4.7783-2.7582a.7948.7948 0 0 0 .3927-.6813v-6.7369l2.02 1.1686a.071.071 0 0 1 .038.052v5.5826a4.504 4.504 0 0 1-4.4945 4.4944zm-9.6607-4.1254a4.4708 4.4708 0 0 1-.5346-3.0137l.142.0852 4.783 2.7582a.7712.7712 0 0 0 .7806 0l5.8428-3.3685v2.3324a.0804.0804 0 0 1-.0332.0615L9.74 19.9502a4.4992 4.4992 0 0 1-6.1408-1.6464zM2.3408 7.8956a4.485 4.485 0 0 1 2.3655-1.9728V11.6a.7664.7664 0 0 0 .3879.6765l5.8144 3.3543-2.0201 1.1685a.0757.0757 0 0 1-.071 0l-4.8303-2.7865A4.504 4.504 0 0 1 2.3408 7.872zm16.5963 3.8558L13.1038 8.364 15.1192 7.2a.0757.0757 0 0 1 .071 0l4.8303 2.7913a4.4944 4.4944 0 0 1-.6765 8.1042v-5.6772a.79.79 0 0 0-.407-.667zm2.0107-3.0231l-.142-.0852-4.7735-2.7818a.7759.7759 0 0 0-.7854 0L9.409 9.2297V6.8974a.0662.0662 0 0 1 .0284-.0615l4.8303-2.7866a4.4992 4.4992 0 0 1 6.6802 4.66zM8.3065 12.863l-2.02-1.1638a.0804.0804 0 0 1-.038-.0567V6.0742a4.4992 4.4992 0 0 1 7.3757-3.4537l-.142.0805L8.704 5.459a.7948.7948 0 0 0-.3927.6813zm1.0976-2.3654l2.602-1.4998 2.6069 1.4998v2.9994l-2.5974 1.4997-2.6067-1.4997Z"/></g></svg>
<div class="t" style="left:2855px;top:1971.9px;font-size:45px;color:#0a0a0a;font-weight:400;letter-spacing:0px;">ChatGPT</div>
<div class="abs" style="left:3411px;top:1944.7500000000002px;width:249px;height:93.5px;background:#d5e2fd;border-radius:47px"></div>
<svg class="abs" style="left:3444px;top:1970.2500000000002px;overflow:visible;" width="42" height="42" viewBox="0 0 42 42" fill="none" stroke="#2e45c2" stroke-width="4" stroke-linecap="round" stroke-linejoin="round"><circle cx="21" cy="21" r="19"/><path d="M13.5 22 L18.5 27 L28.5 16.5"/></svg>
<div class="t" style="left:3504px;top:1968.6px;font-size:45px;color:#2e45c2;font-weight:700;letter-spacing:0px;transform:scaleX(0.89);transform-origin:0 0;">Open</div>
<div class="abs" style="left:912px;top:2066.8500000000004px;width:3358px;height:3.5px;background:#f2f2f2"></div>
<div class="t" style="left:949px;top:2123.5px;font-size:45px;color:#0a0a0a;font-weight:400;letter-spacing:0px;">Steve Manny</div>
<div class="t" style="left:1480px;top:2123.5px;font-size:45px;color:#0a0a0a;font-weight:400;letter-spacing:0.7px;">€ 1.800,00</div>
<div class="abs" style="left:2011px;top:2098.0px;width:455px;height:94px;background:#f3f4f6;border-radius:17px"></div>
<svg class="abs" style="left:2038px;top:2121.6px;overflow:visible;" width="36" height="47" viewBox="0 0 36 47" fill="none" stroke="#7b8494" stroke-width="2.6" stroke-linecap="round" stroke-linejoin="round"><rect x="2.7" y="2.2" width="29.8" height="42.1" rx="6.5"/><path d="M7.9 14.6 H27.6 M7.9 21.9 H27.6 M7.9 29.2 H18.7" stroke-linecap="butt"/></svg>
<div class="t" style="left:2094px;top:2125.5px;font-size:45px;color:#0a0a0a;font-weight:400;letter-spacing:0px;">Request a quote</div>
<div class="abs" style="left:2757px;top:2107.0px;width:77px;height:77px;background:#f3f1f2;border-radius:19px"></div>
<svg class="abs" style="left:2757px;top:2107.0px;overflow:visible;" width="77" height="77" viewBox="0 0 77 77" fill="none" stroke="none" stroke-width="4" stroke-linecap="round" stroke-linejoin="round"><path d="M51.56 26.54 A17.9 17.9 0 0 0 23.40 30.25" stroke="#ea4335" stroke-width="9.2" fill="none" stroke-linecap="butt"/><path d="M23.40 30.25 A17.9 17.9 0 0 0 22.81 47.05" stroke="#fbbc05" stroke-width="9.2" fill="none" stroke-linecap="butt"/><path d="M22.81 47.05 A17.9 17.9 0 0 0 50.41 52.91" stroke="#34a853" stroke-width="9.2" fill="none" stroke-linecap="butt"/><path d="M50.41 52.91 A17.9 17.9 0 0 0 56.80 39.20" stroke="#4285f4" stroke-width="9.2" fill="none" stroke-linecap="butt"/><rect x="39.2" y="34.8" width="21.7" height="8.8" fill="#4285f4"/></svg>
<div class="t" style="left:2855px;top:2125.5px;font-size:45px;color:#0a0a0a;font-weight:400;letter-spacing:0px;">Google</div>
<div class="abs" style="left:3411px;top:2098.2999999999997px;width:249px;height:93.5px;background:#e8e8ea;border-radius:47px"></div>
<svg class="abs" style="left:3444px;top:2123.7999999999997px;overflow:visible;" width="42" height="42" viewBox="0 0 42 42" fill="none" stroke="#5d5c63" stroke-width="4" stroke-linecap="round" stroke-linejoin="round"><circle cx="21" cy="21" r="19"/><path d="M20 11 V21 L28 27.5"/></svg>
<div class="t" style="left:3504px;top:2122.2px;font-size:45px;color:#5d5c63;font-weight:700;letter-spacing:0px;transform:scaleX(0.89);transform-origin:0 0;">Open</div>
<div class="abs" style="left:912px;top:2220.4px;width:3358px;height:3.5px;background:#f2f2f2"></div>
<div class="abs" style="left:913px;top:2262.7px;width:104.3px;height:104.3px;background:#fff;border:3.5px solid #e5e5e5;border-radius:28px"></div>
<svg class="abs" style="left:913px;top:2262.7px;overflow:visible;" width="104.3" height="104.3" viewBox="0 0 104.3 104.3" fill="none" stroke="#7a7a7a" stroke-width="4.3" stroke-linecap="round" stroke-linejoin="round"><path d="M58.6 40.2 L45.2 53.6 L58.6 67"/></svg>
<div class="t" style="left:1079px;top:2294.0px;font-size:39px;color:#0a0a0a;font-weight:400;letter-spacing:0px;">1 to 10 of 949 results</div>
<div class="abs" style="left:1505.3px;top:2262.7px;width:104.3px;height:104.3px;background:#fff;border:3.5px solid #e5e5e5;border-radius:28px"></div>
<svg class="abs" style="left:1505.3px;top:2262.7px;overflow:visible;" width="104.3" height="104.3" viewBox="0 0 104.3 104.3" fill="none" stroke="#000" stroke-width="4.3" stroke-linecap="round" stroke-linejoin="round"><path d="M45.4 40.2 L58.8 53.6 L45.4 67"/></svg>
<div class="abs" style="left:1631.6px;top:2262.7px;width:104.3px;height:104.3px;background:#fff;border:3.5px solid #e5e5e5;border-radius:28px"></div>
<svg class="abs" style="left:1631.6px;top:2262.7px;overflow:visible;" width="104.3" height="104.3" viewBox="0 0 104.3 104.3" fill="none" stroke="#000" stroke-width="4.3" stroke-linecap="round" stroke-linejoin="round"><path d="M37.9 42.1 L48.4 53.6 L37.9 65.1 M52.4 42.1 L62.9 53.6 L52.4 65.1"/></svg>
<div class="abs" style="left:3709.3px;top:2263.8px;width:559.3px;height:118.2px;background:#f3f3f3;border-radius:28px"></div>
<div class="abs" style="left:3895.2px;top:2268px;width:180.6px;height:109.8px;background:#fff;border-radius:5px"></div>
<div class="abs" style="left:4079.5px;top:2268px;width:185.9px;height:109.8px;background:#fff;border-radius:5px 24px 24px 5px"></div>
<div class="t" style="left:3780px;top:2304.0px;font-size:39px;color:#0a0a0a;font-weight:400;letter-spacing:-0.5px;">10</div>
<div class="t" style="left:3966px;top:2303.6px;font-size:39.5px;color:#0a0a0a;font-weight:400;letter-spacing:0px;">20</div>
<div class="t" style="left:4148px;top:2304.0px;font-size:39px;color:#0a0a0a;font-weight:400;letter-spacing:0px;">50</div>
</body></html>
